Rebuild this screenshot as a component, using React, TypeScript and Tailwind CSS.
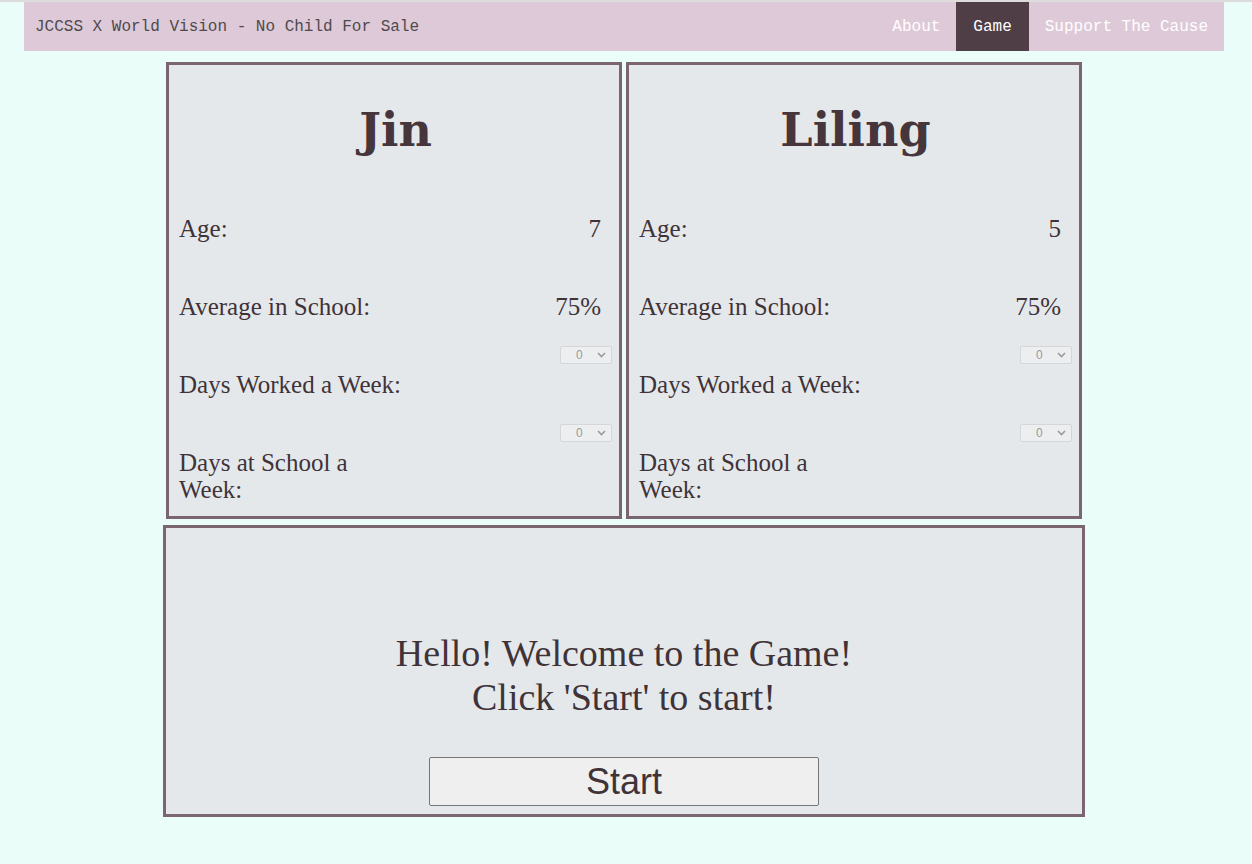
import { useState } from "react";

type Child = { name: string; age: number; average: string };

const kids: Child[] = [
  { name: "Jin", age: 7, average: "75%" },
  { name: "Liling", age: 5, average: "75%" },
];

const DaySelect = () => {
  return (
    <div className="relative h-[18px] w-[52px]">
      <select
        disabled
        defaultValue="0"
        className="block h-[18px] w-[52px] appearance-none rounded-[2px] border border-[#d4d6d8] bg-[#eceef0] pl-[15px] text-[12px] leading-[16px] text-[#9a9a9a] font-['Liberation_Sans',sans-serif]"
      >
        <option value="0">0</option>
      </select>
      <svg
        className="pointer-events-none absolute right-[6px] top-[6px]"
        width="9"
        height="6"
        viewBox="0 0 9 6"
      >
        <path d="M1 1l3.5 3.5L8 1" fill="none" stroke="#9a9a9a" strokeWidth="1.6" />
      </svg>
    </div>
  );
};

const KidCard = ({ kid }: { kid: Child }) => {
  return (
    <div className="w-[456px] border-[3px] border-[#7b6570] bg-[#e5e8eb] pl-[10px] pr-[7px] pt-[37px] pb-[13px] text-[#3f3338] font-['Liberation_Serif',serif]">
      <h1 className="h-[56px] text-center text-[46px] font-bold leading-[56px] text-[#46363b] font-['DejaVu_Serif',serif]">
        {kid.name}
      </h1>

      <div className="mt-[32px] text-[25px]">
        {/* Age */}
        <div className="flex h-[78px] items-center justify-between pr-[11px]">
          <span className="leading-[28px]">Age:</span>
          <span className="leading-[28px]">{kid.age}</span>
        </div>

        {/* Average */}
        <div className="flex h-[78px] items-center justify-between pr-[11px]">
          <span className="leading-[28px]">Average in School:</span>
          <span className="leading-[28px]">{kid.average}</span>
        </div>

        {/* Days worked */}
        <div className="flex h-[78px] flex-col">
          <div className="flex justify-end">
            <DaySelect />
          </div>
          <span className="mt-[7px] w-[232px] leading-[28px]">Days Worked a Week:</span>
        </div>

        {/* Days at school */}
        <div className="flex flex-col">
          <div className="flex justify-end">
            <DaySelect />
          </div>
          <span className="mt-[7px] w-[232px] leading-[27px]">Days at School a Week:</span>
        </div>
      </div>
    </div>
  );
};

export default function App() {
  const [active] = useState("Game");
  const links = ["About", "Game", "Support The Cause"];

  return (
    <div className="min-h-[864px] border-t-2 border-[#dcdcdc] bg-[#eafdf8] pb-[40px]">
      <nav className="ml-[24px] flex h-[49px] w-[1200px] items-stretch justify-between bg-[#dec9d8] text-[16px] font-['Liberation_Mono',monospace]">
        <div className="flex items-center pl-[11px] text-[#4e4a4c]">
          JCCSS X World Vision - No Child For Sale
        </div>
        <div className="flex items-stretch">
          {links.map((l) => (
            <a
              key={l}
              className={
                l === active
                  ? "flex items-center bg-[#4f3e46] px-[17px] text-white"
                  : "flex items-center px-[16px] text-white"
              }
            >
              {l}
            </a>
          ))}
        </div>
      </nav>

      <div className="mt-[11px] flex justify-center gap-[4px] pr-[4px]">
        {kids.map((k) => (
          <KidCard key={k.name} kid={k} />
        ))}
      </div>

      <div className="ml-[163px] mt-[6px] flex w-[922px] flex-col items-center border-[3px] border-[#7b6570] bg-[#e5e8eb] pt-[103px] pb-[8px]">
        <p className="text-center text-[38px] leading-[44px] text-[#3f3338] font-['Liberation_Serif',serif]">
          Hello! Welcome to the Game!
          <br />
          Click 'Start' to start!
        </p>
        <button className="mt-[38px] h-[49px] w-[390px] rounded-[2px] border border-[#767676] bg-[#efefef] text-[36px] leading-[44px] text-[#3f3338] font-['Liberation_Sans',sans-serif]">
          Start
        </button>
      </div>
    </div>
  );
}
